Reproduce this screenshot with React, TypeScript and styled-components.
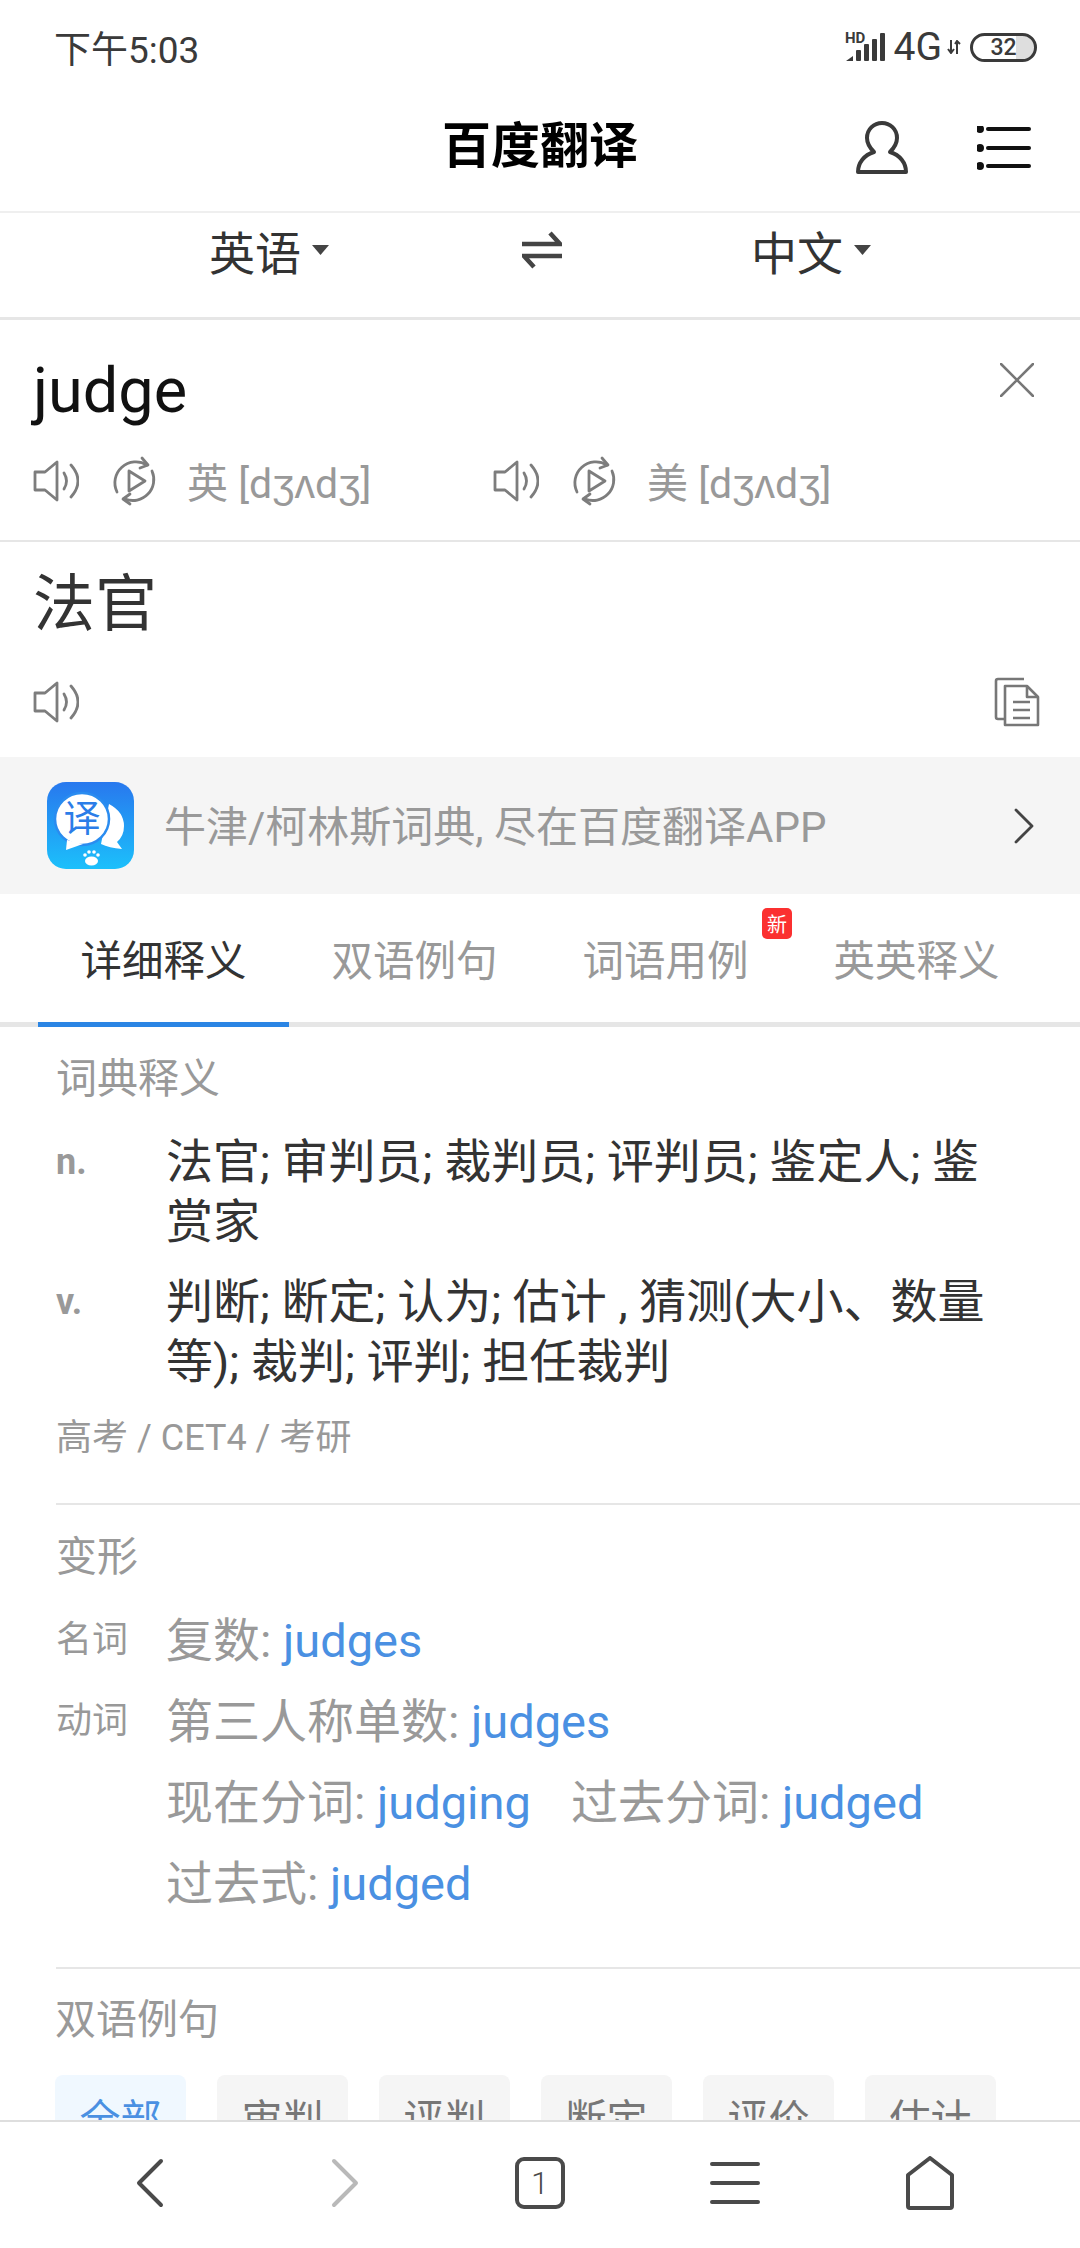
import React from 'react'
import styled, { createGlobalStyle } from 'styled-components'

const GlobalStyle = createGlobalStyle`
    * {
        box-sizing: border-box;
    }
    html, body {
        margin: 0;
        padding: 0;
        background: #fff;
        font-family: Roboto, "Noto Sans CJK SC", sans-serif;
    }
`

const SpeakerIcon = () => (
    <svg width="46" height="42" viewBox="0 0 46 42" fill="none" stroke="#7d7d7d" strokeWidth="2.8" strokeLinejoin="round" strokeLinecap="round">
        <path d="M2 12H12L24 2V40L12 30H2Z" />
        <path d="M31 13Q36 21 31 29" />
        <path d="M38 5Q52 21 38 37" />
    </svg>
)

const ReplayIcon = () => (
    <svg width="46" height="50" viewBox="0 0 46 50" fill="none" stroke="#7d7d7d" strokeWidth="2.8" strokeLinejoin="round" strokeLinecap="round">
        <path d="M5 36A21 21 0 0 1 35 9" />
        <path d="M30 2L36 9L28 12" />
        <path d="M40 15A21 21 0 0 1 13 43" />
        <path d="M18 48L11 43L18 38" />
        <path d="M17 15L33 25L17 35Z" />
    </svg>
)

const DownCaret = () => (
    <svg width="17" height="10" viewBox="0 0 17 10">
        <path d="M0 0H17L8.5 10Z" fill="#444" />
    </svg>
)

const AppLogo = () => (
    <svg width="87" height="87" viewBox="0 0 87 87">
        <defs>
            <linearGradient id="logoFill" x1="0" y1="0" x2="0" y2="1">
                <stop offset="0" stopColor="#2878ee" />
                <stop offset="1" stopColor="#1cc0fb" />
            </linearGradient>
        </defs>
        <rect width="87" height="87" rx="19" fill="url(#logoFill)" />
        {/* speech bubble behind the main one */}
        <path d="M62 22Q77 30 77 44Q77 54 70 60L75 67Q62 66 54 62Z" fill="#fff" />
        <ellipse cx="35" cy="37" rx="27" ry="26" fill="#fff" stroke="#2a8cf0" strokeWidth="2.5" />
        <path d="M20 58L19 68L36 62Z" fill="#fff" />
        <text x="35" y="50" fontSize="37" textAnchor="middle" fill="#2b7de8" fontFamily="Noto Sans CJK SC">译</text>
        <g fill="#fff">
            <circle cx="38" cy="73" r="1.8" />
            <circle cx="42" cy="70" r="1.8" />
            <circle cx="47" cy="70" r="1.8" />
            <circle cx="51" cy="73" r="1.8" />
            <ellipse cx="44.5" cy="79" rx="6.5" ry="4.5" />
        </g>
    </svg>
)

const App: React.FC = () => {
    const chips = ['全部', '审判', '评判', '断定', '评价', '估计']
    const tabs = ['详细释义', '双语例句', '词语用例', '英英释义']

    return (
        <Screen>
            <GlobalStyle />
            <ScrollArea>
                <StatusBar>
                    <Time>下午5:03</Time>
                    <StatusIcons>
                        <svg width="42" height="30" viewBox="0 0 42 30" overflow="visible">
                            <text x="0" y="11" fontSize="15" fontWeight="700" fill="#3a3a3a" fontFamily="Roboto">HD</text>
                            <g fill="#3a3a3a">
                                <path d="M1 29L8 24V29Z" />
                                <rect x="11" y="18" width="5" height="11" rx="1" />
                                <rect x="19" y="12" width="5" height="17" rx="1" />
                                <rect x="27" y="7" width="5" height="22" rx="1" />
                                <rect x="35" y="1" width="5" height="28" rx="1" />
                            </g>
                        </svg>
                        <NetworkLabel>4G</NetworkLabel>
                        <svg width="14" height="14" viewBox="0 0 14 14" fill="none" stroke="#3a3a3a" strokeWidth="2">
                            <path d="M4 0V12M1 9L4 13L7 9" />
                            <path d="M10 14V2M8 4L10 1L13 4" />
                        </svg>
                        <Battery>32</Battery>
                    </StatusIcons>
                </StatusBar>

                <Header>
                    <span />
                    <Title>百度翻译</Title>
                    <HeaderActions>
                        <svg width="52" height="53" viewBox="0 0 52 53" fill="none" stroke="#3a3a3a" strokeWidth="4" strokeLinejoin="round">
                            <path d="M2 51H50C50 42 44 34 34 31C38 27 41 22 41 17C41 8 34 2 26 2C18 2 11 8 11 17C11 22 14 27 18 31C8 34 2 42 2 51Z" />
                        </svg>
                        <svg width="54" height="44" viewBox="0 0 54 44" stroke="#111" strokeWidth="4" strokeLinecap="round" fill="#111">
                            <circle cx="3" cy="3" r="2" />
                            <path d="M11 3H52" />
                            <circle cx="3" cy="22" r="2" />
                            <path d="M11 22H52" />
                            <circle cx="3" cy="40" r="2" />
                            <path d="M11 40H52" />
                        </svg>
                    </HeaderActions>
                </Header>

                <LanguageBar>
                    <LanguageItem>英语<DownCaret /></LanguageItem>
                    <svg width="40" height="38" viewBox="0 0 40 38" fill="none" stroke="#444" strokeWidth="4.5">
                        <path d="M0 13H38L28 2" />
                        <path d="M40 25H2L12 36" />
                    </svg>
                    <LanguageItem>中文<DownCaret /></LanguageItem>
                </LanguageBar>

                <SourcePanel>
                    <SourceRow>
                        <SourceWord>judge</SourceWord>
                        <svg width="34" height="34" viewBox="0 0 34 34" stroke="#777" strokeWidth="2.6" strokeLinecap="round">
                            <path d="M1 1L33 33M33 1L1 33" />
                        </svg>
                    </SourceRow>
                    <PhoneticRow>
                        <Phonetic>
                            <SpeakerIcon />
                            <ReplayIcon />
                            <PhoneticText>英 [dʒʌdʒ]</PhoneticText>
                        </Phonetic>
                        <Phonetic>
                            <SpeakerIcon />
                            <ReplayIcon />
                            <PhoneticText>美 [dʒʌdʒ]</PhoneticText>
                        </Phonetic>
                    </PhoneticRow>
                </SourcePanel>

                <ResultPanel>
                    <ResultWord>法官</ResultWord>
                    <ResultTools>
                        <SpeakerIcon />
                        <svg width="46" height="50" viewBox="0 0 46 50" fill="none" stroke="#777" strokeWidth="2.6" strokeLinejoin="round">
                            <path d="M30 2H4Q2 2 2 4V40Q2 42 4 42H10" />
                            <path d="M11 9H33L44 20V48H11Z" />
                            <path d="M33 9V20H44" />
                            <path d="M19 25H36M19 33H36M19 41H36" />
                        </svg>
                    </ResultTools>
                </ResultPanel>

                <Banner>
                    <AppLogo />
                    <BannerText>牛津/柯林斯词典, 尽在百度翻译APP</BannerText>
                    <svg width="20" height="36" viewBox="0 0 20 36" fill="none" stroke="#444" strokeWidth="2.8" strokeLinecap="round" strokeLinejoin="round">
                        <path d="M2 2L18 18L2 34" />
                    </svg>
                </Banner>

                <TabBar>
                    {tabs.map((tab, i) => (
                        <Tab key={tab} $active={i === 0}>
                            {tab}
                            {i === 2 && <NewBadge>新</NewBadge>}
                        </Tab>
                    ))}
                </TabBar>

                <Section>
                    <SectionTitle>词典释义</SectionTitle>
                    <Definitions>
                        <DefinitionRow>
                            <PartOfSpeech>n.</PartOfSpeech>
                            <DefinitionText>法官; 审判员; 裁判员; 评判员; 鉴定人; 鉴赏家</DefinitionText>
                        </DefinitionRow>
                        <DefinitionRow>
                            <PartOfSpeech>v.</PartOfSpeech>
                            <DefinitionText>判断; 断定; 认为; 估计 , 猜测(大小、数量等); 裁判; 评判; 担任裁判</DefinitionText>
                        </DefinitionRow>
                    </Definitions>
                    <ExamTags>高考 / CET4 / 考研</ExamTags>
                </Section>

                <FormsSection>
                    <SectionTitle>变形</SectionTitle>
                    <Forms>
                        <FormRow>
                            <FormLabel>名词</FormLabel>
                            <FormLine>复数: <Link>judges</Link></FormLine>
                        </FormRow>
                        <FormRow>
                            <FormLabel>动词</FormLabel>
                            <FormLine>第三人称单数: <Link>judges</Link></FormLine>
                        </FormRow>
                        <FormRow>
                            <FormLabel />
                            <FormLine>现在分词: <Link>judging</Link><FormGap />过去分词: <Link>judged</Link></FormLine>
                        </FormRow>
                        <FormRow>
                            <FormLabel />
                            <FormLine>过去式: <Link>judged</Link></FormLine>
                        </FormRow>
                    </Forms>
                </FormsSection>

                <ExamplesSection>
                    <SectionTitle>双语例句</SectionTitle>
                    <Chips>
                        {chips.map((chip, i) => (
                            <Chip key={chip} $active={i === 0}>{chip}</Chip>
                        ))}
                    </Chips>
                </ExamplesSection>
            </ScrollArea>

            <BottomNav>
                <svg width="28" height="50" viewBox="0 0 28 50" fill="none" stroke="#4a4a4a" strokeWidth="4" strokeLinecap="round" strokeLinejoin="round">
                    <path d="M25 3L3 25L25 47" />
                </svg>
                <svg width="28" height="50" viewBox="0 0 28 50" fill="none" stroke="#b9b9b9" strokeWidth="4" strokeLinecap="round" strokeLinejoin="round">
                    <path d="M3 3L25 25L3 47" />
                </svg>
                <TabCount>1</TabCount>
                <svg width="50" height="44" viewBox="0 0 50 44" stroke="#4a4a4a" strokeWidth="4" strokeLinecap="round">
                    <path d="M2 3H48M2 22H48M2 41H48" />
                </svg>
                <svg width="50" height="54" viewBox="0 0 50 54" fill="none" stroke="#4a4a4a" strokeWidth="4" strokeLinejoin="round">
                    <path d="M25 2L47 19V50Q47 52 45 52H5Q3 52 3 50V19Z" />
                </svg>
            </BottomNav>
        </Screen>
    )
}

export default App

const Screen = styled.div`
    display: flex;
    flex-direction: column;
    width: 1080px;
    height: 2248px;
    overflow: hidden;
    background: #fff;
`

const ScrollArea = styled.main`
    flex: 1;
    min-height: 0;
    overflow: hidden;
`

const StatusBar = styled.div`
    display: flex;
    justify-content: space-between;
    align-items: center;
    height: 78px;
    padding: 16px 43px 0 54px;
`

const Time = styled.span`
    font-size: 37px;
    color: #3a3a3a;
`

const StatusIcons = styled.div`
    display: flex;
    align-items: center;
    gap: 5px;
`

const NetworkLabel = styled.span`
    font-size: 39px;
    color: #3a3a3a;
    margin-left: 2px;
`

const Battery = styled.span`
    display: flex;
    justify-content: center;
    align-items: center;
    width: 67px;
    height: 29px;
    margin-left: 4px;
    border: 3px solid #3a3a3a;
    border-radius: 15px;
    font-size: 23px;
    font-weight: 500;
    color: #3a3a3a;
    background: linear-gradient(to right, #fff 70%, #dedede 70%);
`

const Header = styled.header`
    display: grid;
    grid-template-columns: 1fr auto 1fr;
    align-items: center;
    height: 135px;
    padding: 0 49px;
    border-bottom: 2px solid #efefef;
`

const Title = styled.h1`
    margin: 0 0 6px;
    font-size: 49px;
    font-weight: 700;
    color: #000;
`

const HeaderActions = styled.div`
    display: flex;
    justify-content: flex-end;
    align-items: center;
    gap: 69px;
    margin-top: 6px;
`

const LanguageBar = styled.div`
    display: grid;
    grid-template-columns: 313px 229px 1fr;
    align-items: center;
    height: 107px;
    padding: 0 0 30px 209px;
    border-bottom: 3px solid #e6e6e6;
`

const LanguageItem = styled.div`
    display: flex;
    align-items: center;
    gap: 11px;
    font-size: 46px;
    color: #333;
`

const SourcePanel = styled.section`
    height: 222px;
    padding: 0 46px 0 33px;
    border-bottom: 2px solid #e6e6e6;
`

const SourceRow = styled.div`
    display: flex;
    justify-content: space-between;
    align-items: flex-start;
    height: 122px;
    padding-top: 43px;
`

const SourceWord = styled.div`
    font-size: 63px;
    line-height: 56px;
    color: #111;
`

const PhoneticRow = styled.div`
    display: grid;
    grid-template-columns: 460px 1fr;
    height: 78px;
`

const Phonetic = styled.div`
    display: flex;
    align-items: center;
    gap: 33px;
`

const PhoneticText = styled.span`
    margin: 0 0 2px -4px;
    font-size: 41px;
    color: #999;
`

const ResultPanel = styled.section`
    height: 215px;
    padding: 33px 40px 0 33px;
`

const ResultWord = styled.div`
    font-size: 62px;
    line-height: 60px;
    color: #333;
`

const ResultTools = styled.div`
    display: flex;
    justify-content: space-between;
    align-items: center;
    margin-top: 42px;
`

const Banner = styled.div`
    display: flex;
    align-items: center;
    height: 137px;
    padding: 0 46px 0 47px;
    background: #f5f5f5;
`

const BannerText = styled.span`
    flex: 1;
    margin: 0 0 4px 30px;
    font-size: 42px;
    color: #999;
`

const TabBar = styled.nav`
    display: grid;
    grid-template-columns: repeat(4, 251px);
    height: 133px;
    padding: 0 38px;
    border-bottom: 5px solid #e6e6e6;
`

const Tab = styled.div<{ $active: boolean }>`
    position: relative;
    display: flex;
    justify-content: center;
    align-items: center;
    height: 133px;
    font-size: 41.5px;
    color: ${props => (props.$active ? '#333' : '#999')};
    border-bottom: 5px solid ${props => (props.$active ? '#2b85e4' : 'transparent')};
`

const NewBadge = styled.span`
    position: absolute;
    top: 14px;
    right: -1px;
    display: flex;
    justify-content: center;
    align-items: center;
    width: 30px;
    height: 31px;
    border-radius: 5px;
    background: #fb3030;
    color: #fff;
    font-size: 20px;
`

const Section = styled.section`
    margin-left: 56px;
    padding: 22px 0 40px;
    border-bottom: 2px solid #e6e6e6;
`

const SectionTitle = styled.h2`
    margin: 0;
    font-size: 41px;
    line-height: 60px;
    font-weight: 400;
    color: #999;
`

const Definitions = styled.div`
    display: flex;
    flex-direction: column;
    gap: 20px;
    margin-top: 23px;
`

const DefinitionRow = styled.div`
    display: flex;
    padding-right: 64px;
`

const PartOfSpeech = styled.span`
    flex: 0 0 110px;
    font-size: 36px;
    line-height: 60px;
    font-weight: 700;
    color: #999;
`

const DefinitionText = styled.p`
    margin: 0;
    font-size: 47px;
    line-height: 60px;
    color: #333;
`

const ExamTags = styled.div`
    margin-top: 21px;
    font-size: 36px;
    line-height: 50px;
    color: #999;
`

const FormsSection = styled(Section)`
    padding-bottom: 47px;
`

const Forms = styled.div`
    margin-top: 9px;
`

const FormRow = styled.div`
    display: flex;
    align-items: center;
    height: 80px;
    margin-bottom: 1px;
`

const FormLabel = styled.span`
    flex: 0 0 110px;
    font-size: 36px;
    color: #999;
`

const FormLine = styled.span`
    font-size: 47px;
    color: #999;
`

const FormGap = styled.span`
    display: inline-block;
    width: 40px;
`

const Link = styled.span`
    color: #4a90e2;
`

const ExamplesSection = styled.section`
    margin-left: 55px;
    padding-top: 21px;
`

const Chips = styled.div`
    display: flex;
    gap: 31px;
    margin-top: 25px;
`

const Chip = styled.div<{ $active: boolean }>`
    display: flex;
    justify-content: center;
    align-items: center;
    flex: 0 0 131px;
    height: 82px;
    border-radius: 8px;
    font-size: 41px;
    background: ${props => (props.$active ? '#f0f8ff' : '#f5f5f5')};
    color: ${props => (props.$active ? '#4a90e2' : '#777')};
`

const BottomNav = styled.nav`
    display: grid;
    grid-template-columns: repeat(5, 1fr);
    justify-items: center;
    align-items: center;
    flex: 0 0 128px;
    padding: 0 52px 4px;
    border-top: 2px solid #dedede;
    background: #fff;
`

const TabCount = styled.div`
    display: flex;
    justify-content: center;
    align-items: center;
    width: 50px;
    height: 52px;
    border: 4px solid #4a4a4a;
    border-radius: 9px;
    font-size: 32px;
    font-weight: 300;
    color: #4a4a4a;
`
